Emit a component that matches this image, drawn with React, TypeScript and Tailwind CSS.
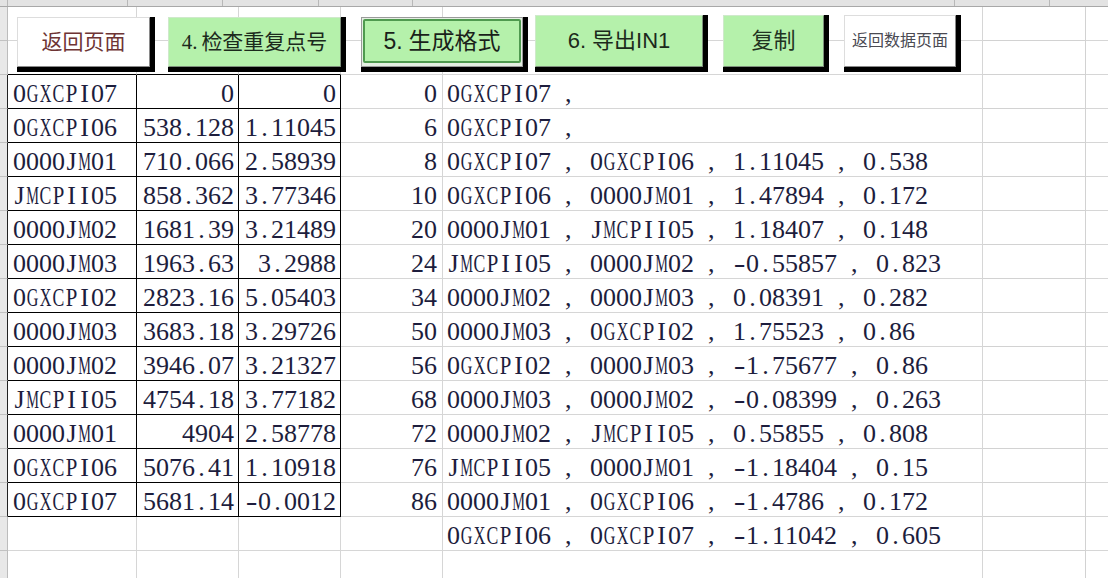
import React from 'react';

const glyph: Record<string, string> = {
  G: 'justify-center scale-x-[0.62]',
  X: 'justify-center scale-x-[0.62]',
  C: 'justify-center scale-x-[0.68]',
  P: 'justify-center scale-x-[0.8]',
  M: 'justify-center scale-x-[0.55]',
  ',': 'justify-start pl-[1px]',
  '-': 'justify-center scale-x-[1.35]',
};

function Mono({ text }: { text: string }) {
  return (
    <span className="whitespace-nowrap leading-none text-[26px] text-[#1d1d3d] font-['Liberation_Serif',serif]">
      {text.split('').map((c, i) => (
        <span key={i} className={'inline-flex w-[13px] whitespace-pre ' + (glyph[c] ?? 'justify-center')}>
          {c}
        </span>
      ))}
    </span>
  );
}

const table: [string, string, string][] = [
  ['0GXCPI07', '0', '0'],
  ['0GXCPI06', '538.128', '1.11045'],
  ['0000JM01', '710.066', '2.58939'],
  ['JMCPII05', '858.362', '3.77346'],
  ['0000JM02', '1681.39', '3.21489'],
  ['0000JM03', '1963.63', '3.2988'],
  ['0GXCPI02', '2823.16', '5.05403'],
  ['0000JM03', '3683.18', '3.29726'],
  ['0000JM02', '3946.07', '3.21327'],
  ['JMCPII05', '4754.18', '3.77182'],
  ['0000JM01', '4904', '2.58778'],
  ['0GXCPI06', '5076.41', '1.10918'],
  ['0GXCPI07', '5681.14', '-0.0012'],
];

const dcol = ['0', '6', '8', '10', '20', '24', '34', '50', '56', '68', '72', '76', '86'];

const ecol = [
  '0GXCPI07 ,',
  '0GXCPI07 ,',
  '0GXCPI07 , 0GXCPI06 , 1.11045 , 0.538',
  '0GXCPI06 , 0000JM01 , 1.47894 , 0.172',
  '0000JM01 , JMCPII05 , 1.18407 , 0.148',
  'JMCPII05 , 0000JM02 , -0.55857 , 0.823',
  '0000JM02 , 0000JM03 , 0.08391 , 0.282',
  '0000JM03 , 0GXCPI02 , 1.75523 , 0.86',
  '0GXCPI02 , 0000JM03 , -1.75677 , 0.86',
  '0000JM03 , 0000JM02 , -0.08399 , 0.263',
  '0000JM02 , JMCPII05 , 0.55855 , 0.808',
  'JMCPII05 , 0000JM01 , -1.18404 , 0.15',
  '0000JM01 , 0GXCPI06 , -1.4786 , 0.172',
  '0GXCPI06 , 0GXCPI07 , -1.11042 , 0.605',
];

type RowKind = 'plain' | 'above' | 'table';

function Row({ kind, a, b, c, d, e }: { kind: RowKind; a?: string; b?: string; c?: string; d?: string; e?: string }) {
  const t = kind === 'table';
  const abcBorder = t
    ? 'border-black'
    : kind === 'above'
    ? 'border-r-[#d6d6d6] border-b-black'
    : 'border-[#d6d6d6]';
  const abcRightLast = t ? 'border-black' : kind === 'above' ? 'border-r-[#d6d6d6] border-b-black' : 'border-[#d6d6d6]';
  return (
    <div className="flex h-[34px]">
      <div
        className={
          'w-[8px] shrink-0 bg-[#e8e8e8] border-b border-r border-b-[#c2c2c2] ' +
          (t ? 'border-r-[#222222]' : 'border-r-[#bcbcbc]')
        }
      />
      <div className={'w-[129px] shrink-0 border-r border-b flex items-center pl-[5px] pt-[5px] ' + abcBorder}>
        {a && <Mono text={a} />}
      </div>
      <div className={'w-[102px] shrink-0 border-r border-b flex items-center justify-end pr-[4px] pt-[5px] ' + abcBorder}>
        {b && <Mono text={b} />}
      </div>
      <div className={'w-[102px] shrink-0 border-r border-b flex items-center justify-end pr-[4px] pt-[5px] ' + abcRightLast}>
        {c && <Mono text={c} />}
      </div>
      <div className="w-[102px] shrink-0 border-r border-b border-[#d6d6d6] flex items-center justify-end pr-[5px] pt-[5px]">
        {d && <Mono text={d} />}
      </div>
      <div className="w-[540px] shrink-0 border-r border-b border-[#d6d6d6] flex items-center pl-[4px] pt-[5px] overflow-visible">
        {e && <Mono text={e} />}
      </div>
      <div className="w-[103px] shrink-0 border-r border-b border-[#d2d2d2]" />
      <div className="flex-1 border-b border-[#d6d6d6]" />
    </div>
  );
}

const shadow = 'shadow-[5px_0_0_0_#000,0_5px_0_0_#000,5px_5px_0_0_#000]';

export default function App() {
  return (
    <div className="w-[1108px] h-[578px] overflow-hidden bg-white relative font-['Liberation_Serif',serif]">
      {/* column header strip */}
      <div className="flex h-[7px] bg-[#e3e3e3] border-b border-[#a8a8a8]">
        <div className="w-[8px] shrink-0 border-r border-[#b8b8b8]" />
        <div className="w-[120px] shrink-0 border-r border-[#b8b8b8]" />
        <div className="w-[95px] shrink-0 border-r border-[#b8b8b8]" />
        <div className="w-[96px] shrink-0 border-r border-[#b8b8b8]" />
        <div className="w-[94px] shrink-0 border-r border-[#b8b8b8]" />
        <div className="w-[542px] shrink-0 border-r border-[#b8b8b8]" />
        <div className="w-[95px] shrink-0 border-r border-[#b8b8b8]" />
        <div className="flex-1" />
      </div>

      <div className="relative">
        <Row kind="plain" />
        <Row kind="above" />
        {table.map((r, i) => (
          <Row key={i} kind="table" a={r[0]} b={r[1]} c={r[2]} d={dcol[i]} e={ecol[i]} />
        ))}
        <Row kind="plain" e={ecol[13]} />
        <Row kind="plain" />

        {/* form buttons lying over the sheet */}
        <div className="absolute left-0 top-0 flex items-start pl-[17px]">
          <div
            className={
              'mt-[10px] w-[133px] h-[50px] bg-white border border-t-[#dddddd] border-l-[#dddddd] border-r-[#8a8a8a] border-b-[#8a8a8a] flex items-center justify-center ' +
              shadow
            }
          >
            <span className="text-[21px] leading-none text-[#6e3434] font-['Liberation_Serif','Noto_Sans_CJK_SC',serif]">
              返回页面
            </span>
          </div>

          <div
            className={
              'ml-[18px] mt-[10px] w-[173px] h-[50px] bg-[#b5f1ab] border border-t-[#cfe9cb] border-l-[#cfe9cb] border-r-[#7d8f7b] border-b-[#7d8f7b] flex items-center justify-center ' +
              shadow
            }
          >
            <span className="text-[21px] leading-none text-[#1c2a1c] font-['Liberation_Serif','Noto_Sans_CJK_SC',serif]">
              <span className="mr-[4px]">4.</span>检查重复点号
            </span>
          </div>

          <div
            className={
              'ml-[20px] mt-[10px] w-[162px] h-[50px] bg-[#e4efe2] border border-[#9a9a9a] p-[1px] pb-[3px] ' + shadow
            }
          >
            <div className="h-full w-full bg-[#b5f1ab] border-2 border-[#4f9a4f] rounded-[2px] flex items-center justify-center">
              <span className="text-[23px] leading-none text-[#1a1f1a] font-['Liberation_Sans','Noto_Sans_CJK_SC',sans-serif]">
                <span className="mr-[6px]">5.</span>生成格式
              </span>
            </div>
          </div>

          <div
            className={
              'ml-[12px] mt-[8px] w-[168px] h-[52px] bg-[#b5f1ab] border border-t-[#cfe9cb] border-l-[#cfe9cb] border-r-[#7d8f7b] border-b-[#7d8f7b] flex items-center justify-center ' +
              shadow
            }
          >
            <span className="text-[22px] leading-none text-[#1c2a1c] font-['Liberation_Sans','Noto_Sans_CJK_SC',sans-serif]">
              <span className="mr-[6px]">6.</span>导出IN1
            </span>
          </div>

          <div
            className={
              'ml-[20px] mt-[8px] w-[101px] h-[52px] bg-[#b5f1ab] border border-t-[#cfe9cb] border-l-[#cfe9cb] border-r-[#7d8f7b] border-b-[#7d8f7b] flex items-center justify-center ' +
              shadow
            }
          >
            <span className="text-[22px] leading-none text-[#223322] font-['Liberation_Serif','Noto_Sans_CJK_SC',serif]">
              复制
            </span>
          </div>

          <div
            className={
              'ml-[20px] mt-[8px] w-[112px] h-[52px] bg-white border border-t-[#dddddd] border-l-[#dddddd] border-r-[#8a8a8a] border-b-[#8a8a8a] flex items-center justify-center ' +
              shadow
            }
          >
            <span className="text-[16px] leading-none text-[#4a4a52] font-['Liberation_Serif','Noto_Sans_CJK_SC',serif]">
              返回数据页面
            </span>
          </div>
        </div>
      </div>
    </div>
  );
}
